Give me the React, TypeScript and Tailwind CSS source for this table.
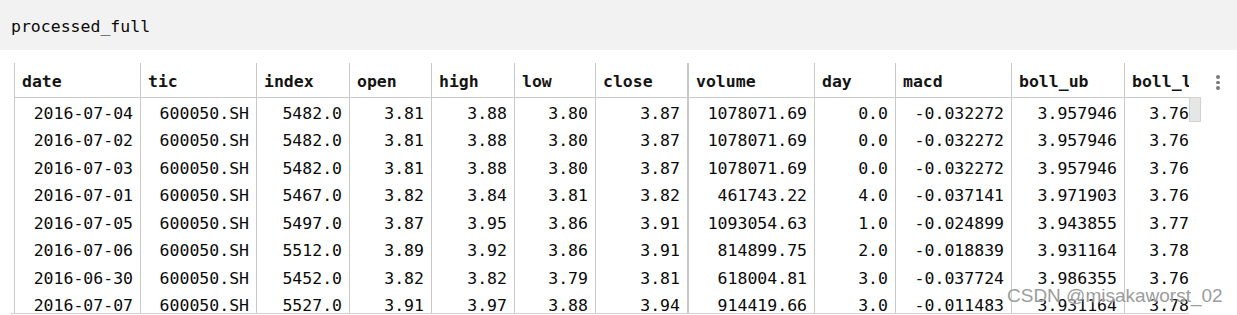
import React from "react";

const cols: { name: string; w: string; b: string }[] = [
  { name: "date", w: "w-[126px]", b: "border-l" },
  { name: "tic", w: "w-[116px]", b: "border-l" },
  { name: "index", w: "w-[93px]", b: "border-l" },
  { name: "open", w: "w-[82px]", b: "border-l" },
  { name: "high", w: "w-[83px]", b: "border-l" },
  { name: "low", w: "w-[81px]", b: "border-l" },
  { name: "close", w: "w-[92px]", b: "border-l" },
  { name: "volume", w: "w-[127px]", b: "border-l-2" },
  { name: "day", w: "w-[81px]", b: "border-l" },
  { name: "macd", w: "w-[116px]", b: "border-l" },
  { name: "boll_ub", w: "w-[113px]", b: "border-l" },
  { name: "boll_lb", w: "w-[65px]", b: "border-l" },
];

const rows: string[][] = [
  ["2016-07-04", "600050.SH", "5482.0", "3.81", "3.88", "3.80", "3.87", "1078071.69", "0.0", "-0.032272", "3.957946", "3.76"],
  ["2016-07-02", "600050.SH", "5482.0", "3.81", "3.88", "3.80", "3.87", "1078071.69", "0.0", "-0.032272", "3.957946", "3.76"],
  ["2016-07-03", "600050.SH", "5482.0", "3.81", "3.88", "3.80", "3.87", "1078071.69", "0.0", "-0.032272", "3.957946", "3.76"],
  ["2016-07-01", "600050.SH", "5467.0", "3.82", "3.84", "3.81", "3.82", "461743.22", "4.0", "-0.037141", "3.971903", "3.76"],
  ["2016-07-05", "600050.SH", "5497.0", "3.87", "3.95", "3.86", "3.91", "1093054.63", "1.0", "-0.024899", "3.943855", "3.77"],
  ["2016-07-06", "600050.SH", "5512.0", "3.89", "3.92", "3.86", "3.91", "814899.75", "2.0", "-0.018839", "3.931164", "3.78"],
  ["2016-06-30", "600050.SH", "5452.0", "3.82", "3.82", "3.79", "3.81", "618004.81", "3.0", "-0.037724", "3.986355", "3.76"],
  ["2016-07-07", "600050.SH", "5527.0", "3.91", "3.97", "3.88", "3.94", "914419.66", "3.0", "-0.011483", "3.931164", "3.78"],
];

export default function App() {
  return (
    <div
      className="relative h-[315px] w-[1237px] overflow-hidden bg-white text-[16.5px] text-[#0a0a0a]"
      style={{ fontFamily: '"DejaVu Sans Mono", "Liberation Mono", monospace' }}
    >
      <div className="flex h-[50px] items-center bg-[#f2f2f2] pl-[11px] pt-[5px]">
        processed_full
      </div>
      <div className="relative mt-[13px] ml-[11px] w-[1178px]">
        <div className="h-[250px] overflow-hidden pl-[3px]">
          <div className="flex h-[35px] w-[1175px] border-b border-[#c9c9c9]">
            {cols.map((c, i) => (
              <div
                key={i}
                className={`${c.w} ${c.b} flex shrink-0 items-center overflow-hidden whitespace-nowrap border-[#c9c9c9] pl-[7px] pt-[5px] font-bold text-[#141414]`}
              >
                {c.name}
              </div>
            ))}
          </div>
          {rows.map((r, ri) => (
            <div key={ri} className="flex h-[27.5px] w-[1175px]">
              {r.map((v, ci) => (
                <div
                  key={ci}
                  className={`${cols[ci].w} ${cols[ci].b} flex shrink-0 items-center justify-end overflow-hidden whitespace-nowrap border-[#c9c9c9] pt-[5px] ${ci === 11 ? "pr-0" : "pr-[7px]"}`}
                >
                  {v}
                </div>
              ))}
            </div>
          ))}
        </div>
        <div className="h-px w-[1178px] bg-[#d4d4d4]" />
        <div className="absolute left-[1178px] top-[34px] h-[25px] w-[12px] border border-[#d2d2d2] bg-[#e6e6e6]" />
      </div>
      <div className="absolute left-[1216px] top-[75px] flex flex-col gap-[2px]">
        <div className="h-[3.5px] w-[3.5px] rounded-full bg-[#7a7a7a]" />
        <div className="h-[3.5px] w-[3.5px] rounded-full bg-[#7a7a7a]" />
        <div className="h-[3.5px] w-[3.5px] rounded-full bg-[#7a7a7a]" />
      </div>
      <div
        className="absolute left-[1007px] top-[286px] whitespace-nowrap text-[19px] leading-none text-[#9c9c9c] [text-shadow:0_0_2px_#ffffff]"
        style={{ fontFamily: '"Liberation Sans", Arial, sans-serif' }}
      >
        CSDN @misakaworst_02
      </div>
    </div>
  );
}
